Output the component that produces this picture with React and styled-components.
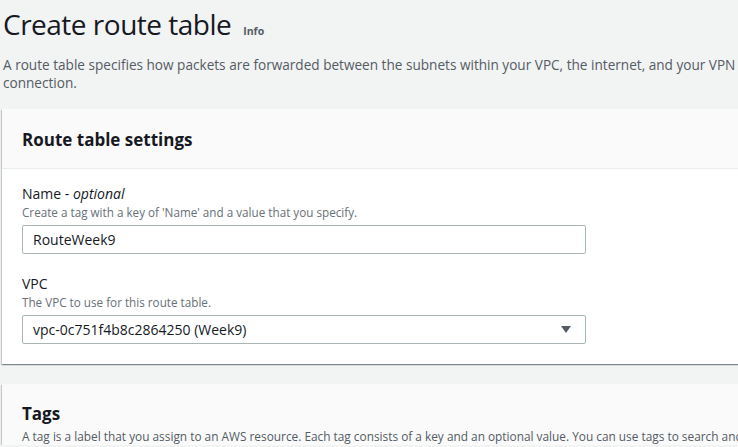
import styled, { createGlobalStyle } from "styled-components";

const GlobalStyle = createGlobalStyle`
    html, body {
        margin: 0;
        background: #f2f3f3;
        overflow: hidden;
    }

    body {
        font-family: "Open Sans", "Noto Sans", sans-serif;
        color: #16191f;
    }
`;

const Page = styled.div`
    width: 780px;
    padding: 0 0 0 2px;
`;

const Header = styled.div`
    padding: 0 0 0 1px;
`;

const Title = styled.h1`
    margin: 0;
    padding-top: 6px;
    font-size: 28px;
    font-weight: 400;
    line-height: 36px;
    letter-spacing: -0.5px;
    display: flex;
    align-items: baseline;
    gap: 12px;
`;

const Info = styled.span`
    font-size: 10.5px;
    line-height: 1;
    letter-spacing: 0;
    font-weight: 700;
    color: #545b64;
`;

const Description = styled.p`
    margin: 14px 0 0;
    font-size: 13.6px;
    line-height: 18px;
    color: #545b64;
    width: 740px;
`;

const Panel = styled.section`
    background: #fff;
    margin-top: ${(p) => p.$top}px;
    box-shadow: 0 1px 1px 0 rgba(0, 28, 36, 0.3), 1px 1px 1px 0 rgba(0, 28, 36, 0.15),
        -1px 1px 1px 0 rgba(0, 28, 36, 0.15);
`;

const PanelHeader = styled.div`
    background: #fafafa;
    border-bottom: ${(p) => (p.$plain ? "none" : "1px solid #eaeded")};
    padding: ${(p) => (p.$plain ? "19px 20px 0" : "20px 20px 17px")};
`;

const PanelTitle = styled.h2`
    margin: 0;
    font-size: 17px;
    font-weight: 700;
    line-height: 22px;
`;

const PanelText = styled.p`
    margin: 2px 0 0;
    font-size: 11.85px;
    line-height: 18px;
    color: #545b64;
    white-space: nowrap;
`;

const PanelBody = styled.div`
    padding: 15px 20px 20px;
    display: flex;
    flex-direction: column;
    gap: 20px;
`;

const Field = styled.div`
    display: flex;
    flex-direction: column;
`;

const Label = styled.label`
    font-size: 14px;
    line-height: 20px;

    em {
        font-style: italic;
    }
`;

const Hint = styled.span`
    font-size: 11.7px;
    line-height: 16px;
    color: #687078;
    margin-bottom: 5px;
`;

const Input = styled.div`
    width: 564px;
    height: 29px;
    box-sizing: border-box;
    border: 1px solid #aab7b8;
    border-radius: 2px;
    background: #fff;
    padding: 0 10px;
    display: flex;
    align-items: center;
    justify-content: space-between;
    font-size: 14px;
`;

const Caret = styled.span`
    width: 0;
    height: 0;
    border-left: 5px solid transparent;
    border-right: 5px solid transparent;
    border-top: 7px solid #545b64;
    margin-right: 4px;
`;

export default function App() {
    return (
        <Page>
            <GlobalStyle />
            <Header>
                <Title>
                    Create route table <Info>Info</Info>
                </Title>
                <Description>
                    A route table specifies how packets are forwarded between the subnets within your VPC, the
                    internet, and your VPN connection.
                </Description>
            </Header>
            <Panel $top={17}>
                <PanelHeader>
                    <PanelTitle>Route table settings</PanelTitle>
                </PanelHeader>
                <PanelBody>
                    <Field>
                        <Label>
                            Name - <em>optional</em>
                        </Label>
                        <Hint>Create a tag with a key of 'Name' and a value that you specify.</Hint>
                        <Input>RouteWeek9</Input>
                    </Field>
                    <Field>
                        <Label>VPC</Label>
                        <Hint>The VPC to use for this route table.</Hint>
                        <Input>
                            vpc-0c751f4b8c2864250 (Week9)
                            <Caret />
                        </Input>
                    </Field>
                </PanelBody>
            </Panel>
            <Panel $top={20}>
                <PanelHeader $plain>
                    <PanelTitle>Tags</PanelTitle>
                    <PanelText>
                        A tag is a label that you assign to an AWS resource. Each tag consists of a key and an
                        optional value. You can use tags to search and filter your resources.
                    </PanelText>
                </PanelHeader>
            </Panel>
        </Page>
    );
}
